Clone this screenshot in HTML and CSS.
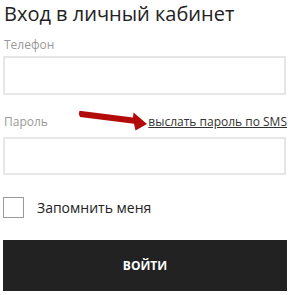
FILE: index.html
```html
<!DOCTYPE html>
<html lang="ru">
  <head>
    <meta charset="UTF-8" />
    <title>Вход в личный кабинет</title>
    <link rel="stylesheet" href="styles.css">
  </head>
  <body>
    <form class="login" name="login">
      <h1 class="title">Вход в личный кабинет</h1>
      <label class="field" for="phone">Телефон</label>
      <input type="text" class="input-box" id="phone" name="phone" />
      <div class="field-row">
        <label class="field" for="password">Пароль</label>
        <svg class="arrow" width="70" height="22" viewBox="0 0 70 22">
          <path d="M1.5 0.8 L55 7.5 L55.5 2.5 L69 14 L57.5 20.5 L56 13.8 L2 7 Q0 4 1.5 0.8 Z" fill="#b30a0a" />
        </svg>
        <a href="#" class="sms">выслать пароль по SMS</a>
      </div>
      <input type="password" class="input-box pass" id="password" name="password" />
      <div class="remember">
        <input type="checkbox" id="remember" class="check-box" />
        <label for="remember">Запомнить меня</label>
      </div>
      <button type="submit" class="enter">ВОЙТИ</button>
    </form>
  </body>
</html>
```

FILE: styles.css
```css
* {
  padding: 0;
  margin: 0;
  box-sizing: border-box;
}
body {
  font-family: "Open Sans", "Noto Sans", sans-serif;
  color: #222;
  background: #fff;
}
.login {
  width: 284px;
  margin-left: 3px;
}
.title {
  font-size: 20px;
  font-weight: 500;
  line-height: 28px;
  margin-left: 1px;
  margin-bottom: 8px;
}
.field {
  display: block;
  font-size: 12px;
  color: #999;
  line-height: 18px;
  margin-left: 1px;
  margin-bottom: 2px;
}
.input-box {
  display: block;
  width: 283px;
  height: 39px;
  border: 2px solid #e6e6e6;
  background: #fff;
  margin-bottom: 18px;
}
.input-box.pass {
  height: 38px;
  margin-bottom: 22px;
}
.field-row {
  position: relative;
  display: flex;
  justify-content: space-between;
  align-items: baseline;
  height: 18px;
  margin-bottom: 6px;
}
.field-row .field {
  margin-bottom: 0;
}
.arrow {
  position: absolute;
  left: 75px;
  top: -3px;
}
.sms {
  font-size: 12px;
  color: #333;
  line-height: 18px;
}
.remember {
  display: flex;
  align-items: center;
  margin-bottom: 22px;
}
.check-box {
  appearance: none;
  width: 21px;
  height: 21px;
  border: 1px solid #999;
  background: #fff;
  margin-right: 13px;
}
.remember label {
  font-size: 14px;
  color: #222;
}
.enter {
  display: block;
  width: 284px;
  height: 51px;
  border: none;
  background: #222;
  color: #fff;
  font-family: "Open Sans", "Noto Sans", sans-serif;
  font-size: 12px;
  font-weight: bold;
}
```
